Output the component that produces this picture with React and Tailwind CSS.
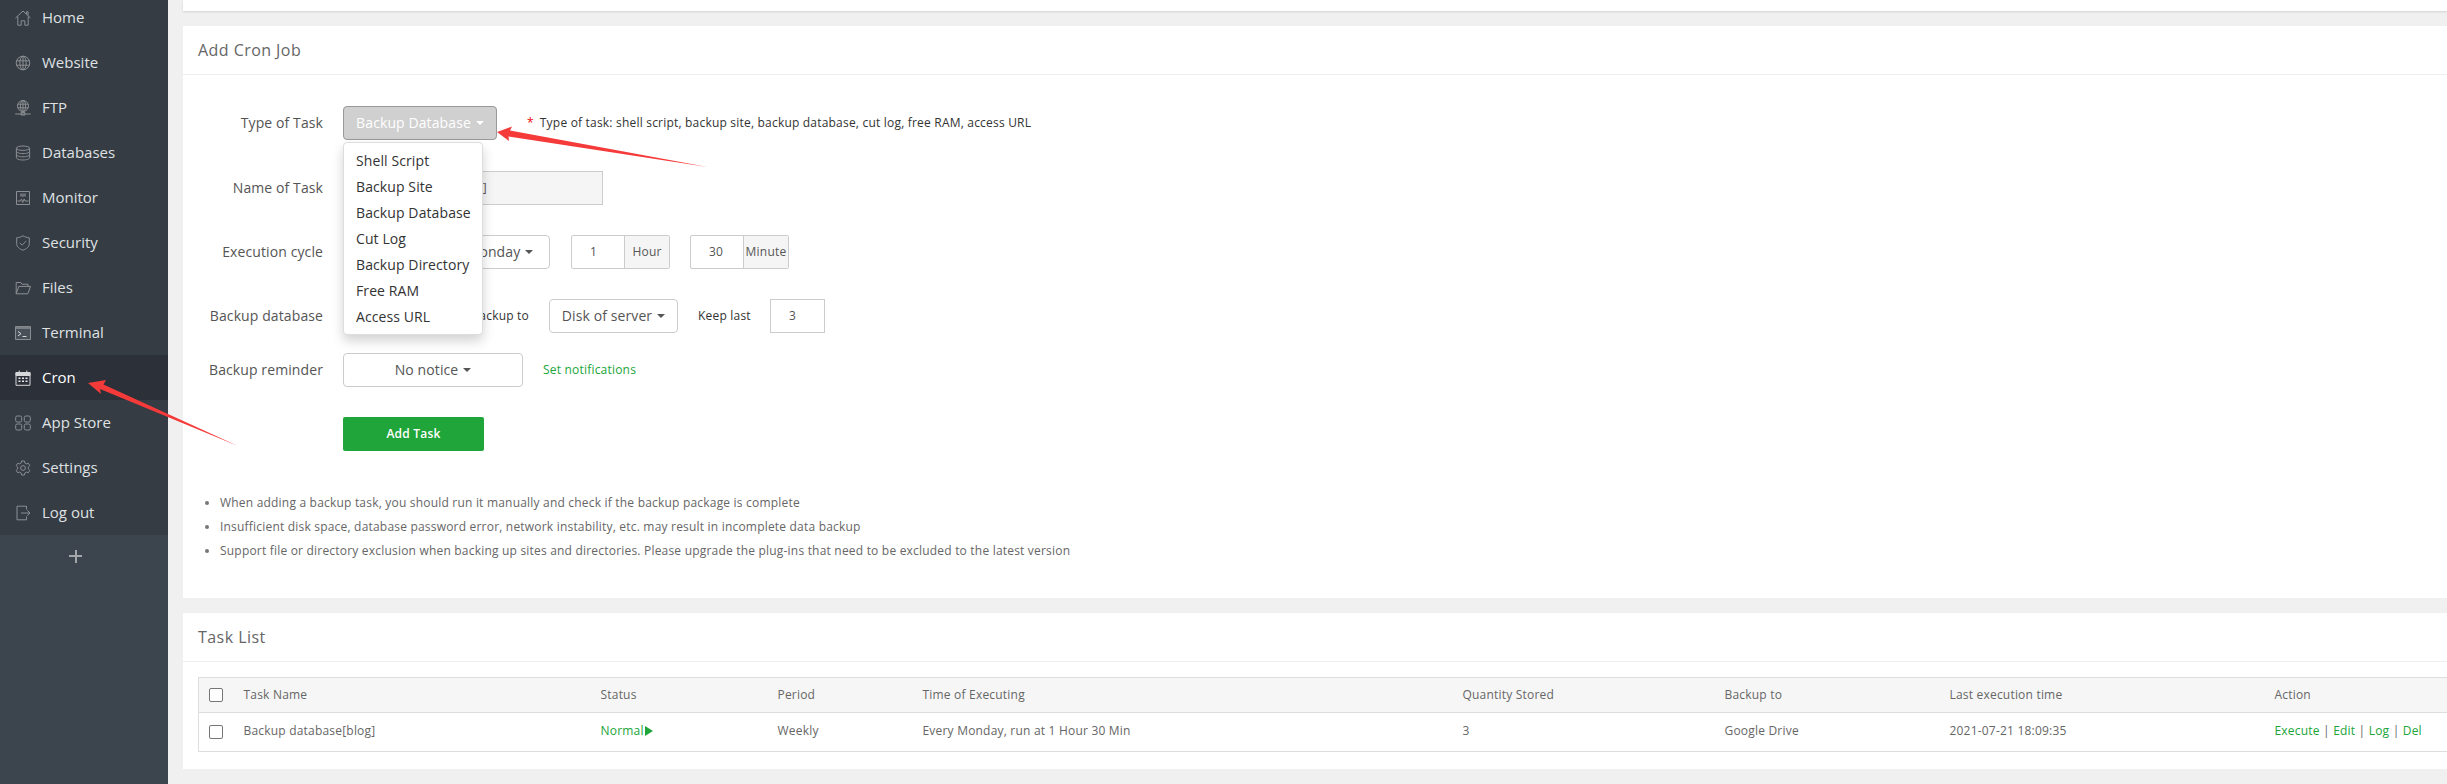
const ic = "w-4 h-4 shrink-0 fill-none stroke-[#8b8f93]";

const HomeIcon = () => (
  <svg viewBox="0 0 16 16" className={ic}>
    <path d="M.5 8 8 1l7.500 7M2.800 6.500v8.700h3.400v-4.400h3.600v4.400h3.400V6.500M11.500 4V1.800h1.600v3.600" />
  </svg>
);
const GlobeIcon = () => (
  <svg viewBox="0 0 16 16" className={ic}>
    <circle cx="8" cy="8" r="6.800" />
    <ellipse cx="8" cy="8" rx="3.200" ry="6.800" />
    <path d="M8 1.200v13.600M1.400 5.800h13.200M1.400 10.200h13.200" />
  </svg>
);
const FtpIcon = () => (
  <svg viewBox="0 0 16 16" className={ic}>
    <circle cx="8" cy="6" r="5.500" />
    <ellipse cx="8" cy="6" rx="2.600" ry="5.500" />
    <path d="M8 .5v11M2.800 4.200h10.400M2.800 7.800h10.400M.2 14h15.600" />
    <path d="M6 12.600h4v2.400H6z" />
  </svg>
);
const DbIcon = () => (
  <svg viewBox="0 0 16 16" className={ic}>
    <ellipse cx="8" cy="3.200" rx="6.600" ry="2.200" />
    <path d="M1.400 3.200v9.600c0 1.200 3 2.200 6.600 2.200s6.600-1 6.600-2.200V3.200M1.400 6.400c0 1.200 3 2.200 6.600 2.200s6.600-1 6.600-2.200M1.400 9.600c0 1.200 3 2.200 6.600 2.200s6.600-1 6.600-2.200" />
  </svg>
);
const MonitorIcon = () => (
  <svg viewBox="0 0 16 16" className={ic}>
    <path d="M1.500 1.500h13v13h-13z" />
    <path d="M2.500 11h3l1-2 1.200 3.500L9.200 9l.8 2h3.500" />
    <path d="M5 3.500h6v3H8.800L8 7.500l-.8-1H5z" className="fill-[#6d7176] stroke-none" />
  </svg>
);
const ShieldIcon = () => (
  <svg viewBox="0 0 16 16" className={ic}>
    <path d="M8 .8c2 1.200 4 1.800 6.300 2v6c0 3-3 5.300-6.300 6.400C4.700 14.100 1.700 11.800 1.700 8.800v-6C4 2.600 6 2 8 .8z" />
    <path d="m4.800 7.800 2.300 2.300 4.100-4" />
  </svg>
);
const FolderIcon = () => (
  <svg viewBox="0 0 16 16" className={ic}>
    <path d="M1.200 13.800V2.500h4.600l1.200 1.700h6v2.200" />
    <path d="M1.200 13.800h11.600l2.700-7.400H3.800z" />
  </svg>
);
const TerminalIcon = () => (
  <svg viewBox="0 0 16 16" className="w-4 h-4 shrink-0 fill-none">
    <path d="M.5 1.500h15v13H.5z" className="fill-[#4a5057] stroke-[#8b8f93]" />
    <path d="M.5 1.500h15v2.500H.5z" className="fill-[#7c8084]" />
    <path d="m3 6.500 3 2.200-3 2.200M7.500 11.500h4" className="stroke-[#d5d7d9]" />
  </svg>
);
const CronIcon = () => (
  <svg viewBox="0 0 16 16" className="w-4 h-4 shrink-0 fill-none">
    <path d="M1 2.500h14v12.800H1z" className="stroke-[#d6d7d9]" />
    <path d="M1 2.500h14v3H1zM4.200.5v3M11.800.5v3" className="fill-[#d6d7d9] stroke-[#d6d7d9]" />
    <path d="M3.500 7.500h2v1.500h-2zM7 7.500h2v1.500H7zM10.500 7.500h2v1.500h-2zM3.500 10.500h2V12h-2zM7 10.500h2V12H7zM10.500 10.500h2V12h-2z" className="fill-[#e8e9ea]" />
  </svg>
);
const AppsIcon = () => (
  <svg viewBox="0 0 16 16" className={ic}>
    <rect x=".7" y="1" width="6" height="6" rx="1.500" />
    <rect x="9.300" y="1" width="6" height="6" rx="1.500" />
    <rect x=".7" y="9" width="6" height="6" rx="1.500" />
    <rect x="9.300" y="9" width="6" height="6" rx="1.500" />
  </svg>
);
const GearIcon = () => (
  <svg viewBox="0 0 16 16" className={ic}>
    <path d="M6.600 1h2.800l.5 2 1.500.9 2-.6 1.400 2.400-1.500 1.400v1.800l1.500 1.400-1.400 2.400-2-.6-1.500.9-.5 2H6.600l-.5-2-1.500-.9-2 .6-1.400-2.400 1.500-1.400V7.100L1.200 5.700l1.400-2.400 2 .6 1.500-.9z" />
    <circle cx="8" cy="8" r="2.400" />
  </svg>
);
const LogoutIcon = () => (
  <svg viewBox="0 0 16 16" className={ic}>
    <path d="M11.500 4.500V1.200H2v13.600h9.500v-3.300" />
    <path d="M6 8h9M12.300 5.300 15 8l-2.700 2.700" />
  </svg>
);

const menu = [
  ["Home", HomeIcon],
  ["Website", GlobeIcon],
  ["FTP", FtpIcon],
  ["Databases", DbIcon],
  ["Monitor", MonitorIcon],
  ["Security", ShieldIcon],
  ["Files", FolderIcon],
  ["Terminal", TerminalIcon],
  ["Cron", CronIcon],
  ["App Store", AppsIcon],
  ["Settings", GearIcon],
  ["Log out", LogoutIcon],
];

const taskTypes = ["Shell Script", "Backup Site", "Backup Database", "Cut Log", "Backup Directory", "Free RAM", "Access URL"];

const Caret = ({ color = "border-t-[#555]" }) => (
  <span className={`inline-block ml-[5px] w-0 h-0 border-x-[4px] border-x-transparent border-t-[4px] ${color}`} />
);

const Select = ({ children, className = "" }) => (
  <div className={`h-[34px] pb-[1px] flex items-center justify-center rounded-[4px] border border-[#ccc] bg-white text-[14px] tracking-[0.1px] text-[#555] ${className}`}>
    {children}
    <Caret />
  </div>
);

const TimeInput = ({ value, unit, className }) => (
  <div className={`h-[34px] flex border border-[#ccc] rounded-[2px] text-[12px] text-[#555] ${className}`}>
    <div className="flex-1 flex items-center pl-[18px]">{value}</div>
    <div className="w-[45px] flex items-center justify-center border-l border-[#ccc] bg-[#f5f5f5]">{unit}</div>
  </div>
);

const Row = ({ label, className = "", children }) => (
  <div className={`flex items-center h-[34px] ${className}`}>
    <div className="w-[140px] mr-[20px] pb-[2px] text-right text-[14px] tracking-[0.1px] text-[#555]">{label}</div>
    {children}
  </div>
);

const columns = [
  ["Task Name", "w-[357px]"],
  ["Status", "w-[177px]"],
  ["Period", "w-[145px]"],
  ["Time of Executing", "w-[540px]"],
  ["Quantity Stored", "w-[262px]"],
  ["Backup to", "w-[225px]"],
  ["Last execution time", "w-[325px]"],
  ["Action", ""],
];

const Check = () => <span className="block mx-auto w-[14px] h-[14px] rounded-[2px] border border-[#767676] bg-white" />;

const App = () => {
  return (
    <div className="relative flex h-[784px] w-[2447px] overflow-hidden bg-[#f0f0f0] tracking-[0.2px] font-['Open_Sans','Liberation_Sans',sans-serif]">
      <aside className="w-[168px] shrink-0 bg-[#3c444d] tracking-normal">
        <ul className="-mt-[5px] bg-[#363c43]">
          {menu.map(([name, Icon]) => (
            <li
              key={name}
              className={`h-[45px] pl-[15px] flex items-center gap-[11px] text-[15px] ${name === "Cron" ? "bg-[#2c3038] text-white" : "text-[#dfe1e3]"}`}
            >
              <Icon />
              {name}
            </li>
          ))}
        </ul>
        <div className="relative h-[42px] pr-[17px] flex items-center justify-center">
          <span className="block w-[13px] h-[2px] bg-[#a4a7aa]" />
          <span className="absolute w-[2px] h-[13px] bg-[#a4a7aa] left-[75px]" />
        </div>
      </aside>

      <main className="flex-1 min-w-0 pl-[15px]">
        <div className="h-[11px] bg-white shadow-[0_1px_2px_rgba(0,0,0,0.12)]" />

        <section className="mt-[15px] h-[572px] bg-white">
          <h2 className="h-[49px] px-[15px] flex items-center border-b border-[#eee] text-[16px] tracking-[0.45px] text-[#666]">Add Cron Job</h2>

          <div className="pt-[31px]">
            <Row label="Type of Task" className="relative">
              <div className="w-[154px] h-[34px] pb-[1px] flex items-center justify-center rounded-[4px] border border-[#999] bg-[#d0d0d0] text-[14px] tracking-[0.1px] text-white">
                Backup Database
                <Caret color="border-t-white" />
              </div>
              <span className="ml-[30px] mr-[6px] text-[12px] text-[#ef0808]">*</span>
              <span className="text-[12px] text-[#333]">Type of task: shell script, backup site, backup database, cut log, free RAM, access URL</span>
              <ul className="absolute left-[160px] top-[36px] z-10 w-[140px] h-[193px] py-[4px] rounded-[4px] border border-[#ddd] bg-white shadow-[0_6px_12px_rgba(0,0,0,0.175)] text-[14px] tracking-[0.1px] text-[#333]">
                {taskTypes.map((t) => (
                  <li key={t} className="h-[26px] pl-[12px] flex items-center">{t}</li>
                ))}
              </ul>
            </Row>

            <Row label="Name of Task" className="mt-[31px]">
              <div className="w-[260px] h-[34px] pl-[11px] flex items-center border border-[#ccc] bg-[#f5f5f5] text-[12px] text-[#555]">Backup database[blog]</div>
            </Row>

            <Row label="Execution cycle" className="mt-[30px]">
              <Select className="w-[100px] mr-[7px]">Weekly</Select>
              <Select className="w-[100px] mr-[21px]">Monday</Select>
              <TimeInput value="1" unit="Hour" className="w-[99px] mr-[20px]" />
              <TimeInput value="30" unit="Minute" className="w-[99px]" />
            </Row>

            <Row label="Backup database" className="mt-[30px]">
              <Select className="w-[118px] mr-[8px]">blog</Select>
              <span className="w-[60px] mr-[20px] text-right text-[12px] text-[#333] whitespace-nowrap">Backup to</span>
              <Select className="w-[129px] mr-[20px]">Disk of server</Select>
              <span className="w-[52px] mr-[20px] text-[12px] text-[#333] whitespace-nowrap">Keep last</span>
              <div className="w-[55px] h-[34px] pl-[18px] flex items-center border border-[#ccc] text-[12px] text-[#555]">3</div>
            </Row>

            <Row label="Backup reminder" className="mt-[20px]">
              <Select className="w-[180px]">No notice</Select>
              <span className="ml-[20px] text-[12px] text-[#20a53a]">Set notifications</span>
            </Row>

            <div className="mt-[30px] ml-[160px] w-[141px] h-[34px] flex items-center justify-center rounded-[2px] bg-[#20a53a] text-[12px] font-semibold text-white">Add Task</div>
          </div>

          <ul className="mt-[40px] pl-[37px] list-disc text-[12px] leading-[24px] text-[#666] marker:text-[#777]">
            <li>When adding a backup task, you should run it manually and check if the backup package is complete</li>
            <li>Insufficient disk space, database password error, network instability, etc. may result in incomplete data backup</li>
            <li>Support file or directory exclusion when backing up sites and directories. Please upgrade the plug-ins that need to be excluded to the latest version</li>
          </ul>
        </section>

        <section className="mt-[15px] h-[156px] bg-white">
          <h2 className="h-[49px] px-[15px] pb-[1px] flex items-center border-b border-[#eee] text-[16px] tracking-[0.45px] text-[#666]">Task List</h2>
          <div className="mt-[15px] pl-[15px]">
            <table className="table-fixed w-[2249px] border border-r-0 border-[#ddd] text-[12px] text-[#666]">
              <thead>
                <tr className="h-[35px] bg-[#f6f6f6] border-b border-[#ddd]">
                  <th className="w-[35px] font-normal"><Check /></th>
                  {columns.map(([c, w]) => (
                    <th key={c} className={`${w} pl-[10px] text-left font-normal`}>{c}</th>
                  ))}
                </tr>
              </thead>
              <tbody>
                <tr className="h-[39px]">
                  <td><Check /></td>
                  <td className="pl-[10px] pb-[2px]">Backup database[blog]</td>
                  <td className="pl-[10px] pb-[2px] text-[#20a53a]">
                    <span className="inline-flex items-center">
                      Normal
                      <span className="ml-[1px] w-0 h-0 border-y-[5px] border-y-transparent border-l-[8px] border-l-[#20a53a]" />
                    </span>
                  </td>
                  <td className="pl-[10px] pb-[2px]">Weekly</td>
                  <td className="pl-[10px] pb-[2px]">Every Monday, run at 1 Hour 30 Min</td>
                  <td className="pl-[10px] pb-[2px]">3</td>
                  <td className="pl-[10px] pb-[2px]">Google Drive</td>
                  <td className="pl-[10px] pb-[2px]">2021-07-21 18:09:35</td>
                  <td className="pl-[10px] pb-[2px]">
                    <span className="text-[#20a53a]">Execute</span> | <span className="text-[#20a53a]">Edit</span> | <span className="text-[#20a53a]">Log</span> | <span className="text-[#20a53a]">Del</span>
                  </td>
                </tr>
              </tbody>
            </table>
          </div>
        </section>
      </main>

      {/* red annotation arrows drawn over the screenshot */}
      <svg className="absolute left-0 top-0 z-20 pointer-events-none" width="2447" height="784">
        <polygon points="497,132 512,126.500 510,130.500 707.500,167 508.500,136.500 509,141" fill="#f53a3a" />
        <polygon points="88,383 106,380 103.500,384.500 238,446 100,389 101,394" fill="#f53a3a" />
      </svg>
    </div>
  );
};

export default App;
